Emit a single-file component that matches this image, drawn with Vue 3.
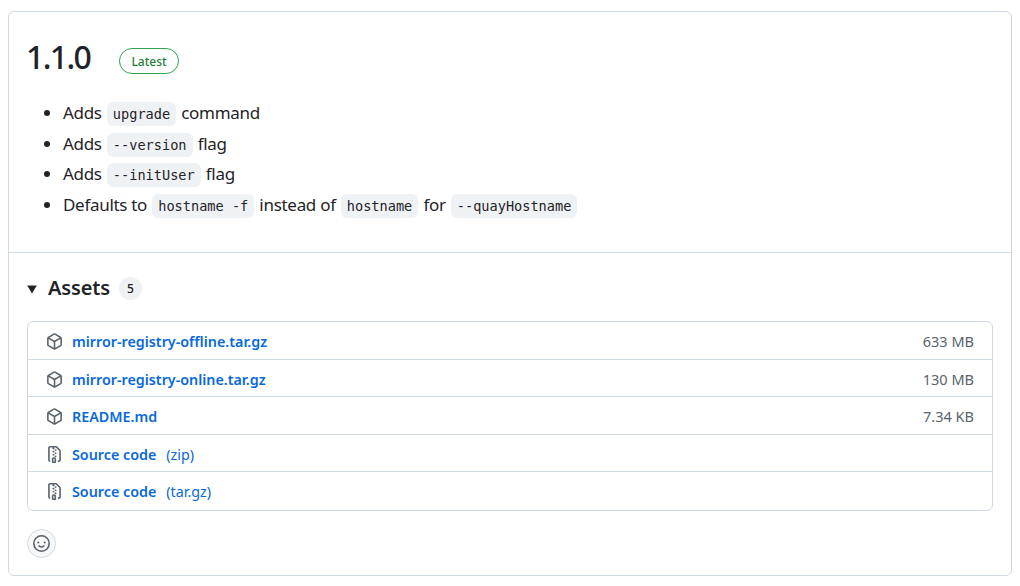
<script setup>
const assets = [
  { name: 'mirror-registry-offline.tar.gz', size: '633 MB', icon: 'pkg' },
  { name: 'mirror-registry-online.tar.gz', size: '130 MB', icon: 'pkg' },
  { name: 'README.md', size: '7.34 KB', icon: 'pkg' },
  { name: 'Source code', ext: '(zip)', icon: 'zip' },
  { name: 'Source code', ext: '(tar.gz)', icon: 'zip' },
]
const pkg = 'm8.878.392 5.25 3.045c.54.314.872.89.872 1.514v6.098a1.75 1.75 0 0 1-.872 1.514l-5.25 3.045a1.75 1.75 0 0 1-1.756 0l-5.25-3.045A1.75 1.75 0 0 1 1 11.049V4.951c0-.624.332-1.201.872-1.514L7.122.392a1.75 1.75 0 0 1 1.756 0ZM7.875 1.69l-4.63 2.685L8 7.133l4.755-2.758-4.63-2.685a.248.248 0 0 0-.25 0ZM2.5 5.677v5.372c0 .09.047.171.125.216l4.625 2.683V8.432Zm6.25 8.271 4.625-2.683a.25.25 0 0 0 .125-.216V5.677L8.75 8.432Z'
const zip = 'M3.5 1.75v11.5c0 .09.048.173.126.217a.75.75 0 0 1-.752 1.298A1.748 1.748 0 0 1 2 13.25V1.75C2 .784 2.784 0 3.75 0h5.586c.464 0 .909.185 1.237.513l2.914 2.914c.329.328.513.773.513 1.237v8.586A1.75 1.75 0 0 1 12.25 15h-.5a.75.75 0 0 1 0-1.5h.5a.25.25 0 0 0 .25-.25V4.664a.25.25 0 0 0-.073-.177L9.513 1.573a.25.25 0 0 0-.177-.073H7.25a.75.75 0 0 1 0 1.5h-.5a.75.75 0 0 1 0-1.5h-3a.25.25 0 0 0-.25.25Zm3.75 8.75h.5c.966 0 1.75.784 1.75 1.75v3a.75.75 0 0 1-.75.75h-2.5a.75.75 0 0 1-.75-.75v-3c0-.966.784-1.75 1.75-1.75ZM6 5.25a.75.75 0 0 1 .75-.75h.5a.75.75 0 0 1 0 1.5h-.5A.75.75 0 0 1 6 5.25Zm.75 2.25h.5a.75.75 0 0 1 0 1.5h-.5a.75.75 0 0 1 0-1.5ZM8 6.75A.75.75 0 0 1 8.75 6h.5a.75.75 0 0 1 0 1.5h-.5A.75.75 0 0 1 8 6.75ZM8.75 3h.5a.75.75 0 0 1 0 1.5h-.5a.75.75 0 0 1 0-1.5ZM8 9.75A.75.75 0 0 1 8.75 9h.5a.75.75 0 0 1 0 1.5h-.5A.75.75 0 0 1 8 9.75Zm-1 2.5v2.25h1v-2.25a.25.25 0 0 0-.25-.25h-.5a.25.25 0 0 0-.25.25Z'
const smile = 'M8 0a8 8 0 1 1 0 16A8 8 0 0 1 8 0ZM1.5 8a6.5 6.5 0 1 0 13 0 6.5 6.5 0 0 0-13 0Zm3.82 1.636a.75.75 0 0 1 1.038.175l.007.009c.103.118.22.222.35.31.264.178.683.37 1.285.37.602 0 1.02-.192 1.285-.371.13-.088.247-.192.35-.31l.007-.008a.75.75 0 0 1 1.222.87l-.022-.015c.02.013.021.015.021.015v.001l-.001.002-.002.003-.005.007-.014.019a2.066 2.066 0 0 1-.184.213c-.16.166-.338.316-.53.445-.63.418-1.37.638-2.127.629-.946 0-1.652-.308-2.126-.63a3.331 3.331 0 0 1-.715-.657l-.014-.02-.005-.006-.002-.003v-.002h-.001l.613-.432-.614.43a.75.75 0 0 1 .183-1.044ZM12 7a1 1 0 1 1-2 0 1 1 0 0 1 2 0ZM5 8a1 1 0 1 1 0-2 1 1 0 0 1 0 2Zm5.25 2.25.592.416a97.71 97.71 0 0 0-.592-.416Z'
</script>

<template>
  <div class="page">
    <section class="card">
      <div class="body">
        <div class="title">
          <h1>1.1.0</h1>
          <span class="latest">Latest</span>
        </div>
        <ul class="notes">
          <li>Adds <code>upgrade</code> command</li>
          <li>Adds <code>--version</code> flag</li>
          <li>Adds <code>--initUser</code> flag</li>
          <li>Defaults to <code>hostname -f</code> instead of <code>hostname</code> for <code>--quayHostname</code></li>
        </ul>
      </div>
      <div class="footer">
        <div class="assets-head">
          <svg class="tri" width="12" height="12" viewBox="0 0 12 12"><path d="M1.2 2.6h9.6L6 10.4Z" fill="#1f2328" /></svg>
          <span class="assets-title">Assets</span>
          <span class="counter">5</span>
        </div>
        <ul class="assets">
          <li v-for="a in assets" :key="a.name + a.ext" class="asset">
            <svg class="icon" width="17" height="17" viewBox="0 0 16 16"><path :d="a.icon === 'pkg' ? pkg : zip" fill="#59636e" /></svg>
            <span class="name">{{ a.name }}</span>
            <span v-if="a.ext" class="ext">{{ a.ext }}</span>
            <span v-if="a.size" class="size">{{ a.size }}</span>
          </li>
        </ul>
        <button class="react" type="button">
          <svg width="17" height="17" viewBox="0 0 16 16"><path :d="smile" fill="#59636e" /></svg>
        </button>
      </div>
    </section>
  </div>
</template>

<style>
html, body { background: #fff; }
</style>

<style scoped>
.page {
  padding: 11px 8px 0;
  font-family: "Noto Sans", "Open Sans", sans-serif;
  color: #1f2328;
}
.card {
  height: 565px;
  box-sizing: border-box;
  border: 1px solid #d1d9e0;
  border-radius: 6px;
}
.body {
  height: 241px;
  box-sizing: border-box;
  padding: 24px 18px 0;
  border-bottom: 1px solid #d1d9e0;
}
.title {
  display: flex;
  align-items: center;
  gap: 29px;
  height: 46px;
}
h1 {
  width: 64px;
  margin: 0 0 0 -1px;
  font-size: 32px;
  font-weight: 500;
  letter-spacing: -1.6px;
  line-height: 42px;
  align-self: flex-start;
}
.latest {
  display: inline-flex;
  align-items: center;
  justify-content: center;
  box-sizing: border-box;
  width: 60px;
  height: 26px;
  margin-top: 4px;
  border: 1px solid #2da44e;
  border-radius: 13px;
  color: #1a7f37;
  font-size: 12px;
  font-weight: 500;
}
.notes {
  margin: 16px 0 0;
  padding: 0 0 0 36px;
  list-style: disc;
  font-size: 17px;
  letter-spacing: -0.3px;
}
.notes li {
  height: 30.5px;
  line-height: 30px;
  white-space: nowrap;
}
code {
  font-family: "DejaVu Sans Mono", monospace;
  font-size: 13.6px;
  letter-spacing: 0;
  background: #eff2f5;
  border-radius: 6px;
  padding: 4px 6px;
  margin: 0 1px;
}
.footer {
  padding: 20px 18px 0;
}
.assets-head {
  display: flex;
  align-items: center;
  height: 28px;
}
.tri { margin-left: -1px; margin-right: 10px; margin-top: 3px; }
.assets-title {
  font-size: 20px;
  font-weight: 600;
  letter-spacing: -0.15px;
}
.counter {
  display: inline-flex;
  align-items: center;
  justify-content: center;
  width: 23px;
  height: 23px;
  margin-left: 9px;
  margin-top: 3px;
  border-radius: 12px;
  background: #eff2f5;
  font-size: 12px;
  font-weight: 500;
}
.assets {
  list-style: none;
  margin: 20px 0 0;
  padding: 0;
  border: 1px solid #d1d9e0;
  border-radius: 6px;
}
.asset {
  display: flex;
  align-items: center;
  height: 37.2px;
  box-sizing: border-box;
  padding: 1px 18px 0;
  font-size: 14.3px;
}
.asset + .asset { border-top: 1px solid #d1d9e0; padding-top: 3px; }
.asset:last-child { height: 39.2px; padding-top: 2px; }
.icon { flex: none; margin-right: 9px; }
.name {
  color: #0969da;
  font-weight: 600;
}
.ext {
  color: #0969da;
  margin-left: 10px;
}
.size {
  margin-left: auto;
  color: #59636e;
  font-size: 14.5px;
}
.asset + .asset .size { margin-top: -2px; }
.react {
  display: flex;
  align-items: center;
  justify-content: center;
  width: 29px;
  height: 29px;
  margin-top: 18px;
  padding: 0;
  border: 1px solid #d1d9e0;
  border-radius: 50%;
  background: #f6f8fa;
}
</style>
